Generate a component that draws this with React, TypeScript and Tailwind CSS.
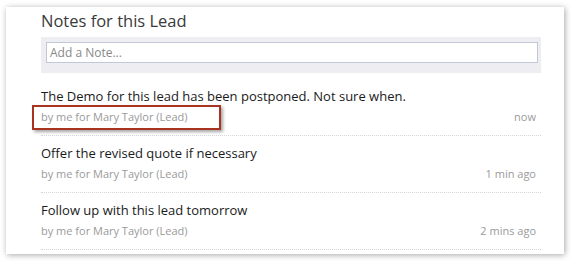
import React from 'react';

interface Note {
  text: string;
  when: string;
  highlight?: boolean;
}

const notes: Note[] = [
  { text: 'The Demo for this lead has been postponed. Not sure when.', when: 'now', highlight: true },
  { text: 'Offer the revised quote if necessary', when: '1 min ago' },
  { text: 'Follow up with this lead tomorrow', when: '2 mins ago' },
];

function NoteRow({ note }: { note: Note }) {
  return (
    <div className="h-[57px] border-b border-dotted border-[#d6d6d6] pt-[8px]">
      <div className="text-[13px] leading-[18px] text-[#1a1a1a]">{note.text}</div>
      <div className="flex items-center justify-between mt-[4px] pr-[5px]">
        <div className="relative text-[11px] leading-[16px] text-[#9a9a9a]">
          {note.highlight && (
            <span className="absolute -left-[9px] -top-[4px] w-[189px] h-[25px] border-2 border-[#a8331f] shadow-[2px_2px_3px_rgba(0,0,0,0.35)]" />
          )}
          by me for Mary Taylor (Lead)
        </div>
        <div className="text-[11px] leading-[16px] text-[#9a9a9a]">{note.when}</div>
      </div>
    </div>
  );
}

export default function App() {
  return (
    <div className="w-[571px] h-[261px] bg-white pt-[7px] pl-[6px]" style={{ fontFamily: '"Open Sans", sans-serif' }}>
      <div className="w-[558px] h-[247px] bg-white shadow-[1px_1px_6px_rgba(0,0,0,0.35)] pl-[35px] pr-[23px] pt-[2px]">
        {/* Header */}
        <h2 className="text-[16.5px] leading-[24px] text-[#3a3a3a]">Notes for this Lead</h2>
        <div className="mt-[4px] bg-[#ededf2] h-[36px] pl-[5px] pr-[3px] pt-[5px]">
          <div className="h-[21px] bg-white border border-[#c3c8d6] pl-[3px] text-[12px] leading-[19px] text-[#888]">
            Add a Note...
          </div>
        </div>

        {/* Notes */}
        <div className="mt-[6px]">
          {notes.map((n, i) => (
            <NoteRow key={i} note={n} />
          ))}
        </div>
      </div>
    </div>
  );
}
